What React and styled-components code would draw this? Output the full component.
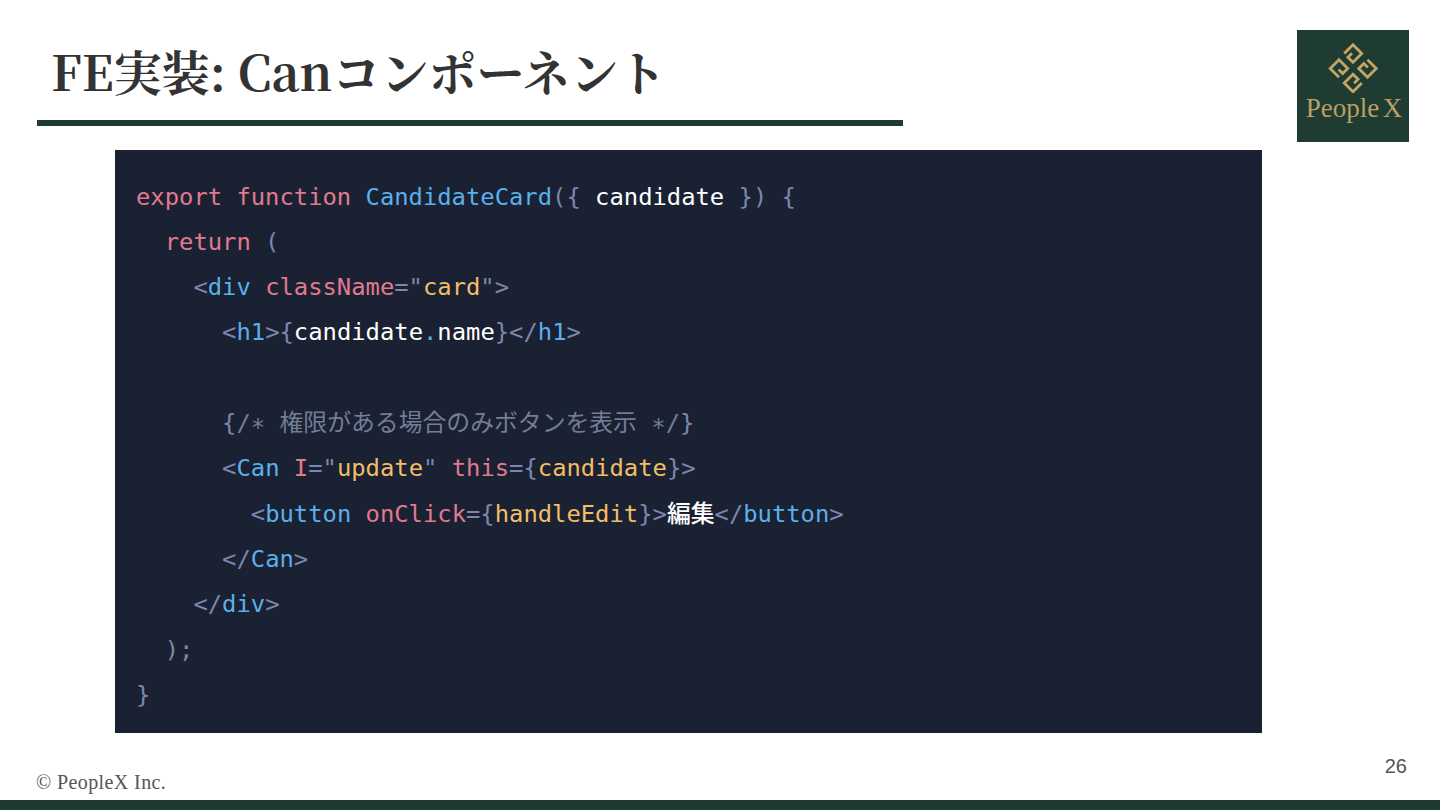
import React from "react";
import styled, { createGlobalStyle } from "styled-components";

const GREEN = "#1f3a30";

const Global = createGlobalStyle`
  html, body {
    margin: 0;
    padding: 0;
    background: #fff;
  }
`;

const Slide = styled.div`
  width: 1440px;
  height: 810px;
  display: flex;
  flex-direction: column;
  overflow: hidden;
  background: #fff;
`;

const Header = styled.header`
  display: flex;
  justify-content: space-between;
  align-items: flex-start;
  padding: 30px 31px 0 37px;
  height: 120px;
`;

const TitleWrap = styled.div`
  width: 866px;
  height: 96px;
  box-sizing: border-box;
  border-bottom: 6px solid ${GREEN};
  padding-left: 14px;
`;

const Title = styled.h1`
  margin: 0;
  font-family: "Noto Serif CJK JP", "Liberation Serif", "Noto Sans CJK JP", serif;
  font-size: 48px;
  font-weight: 700;
  line-height: 82px;
  color: #333;
  white-space: nowrap;
`;

const LogoBox = styled.div`
  width: 112px;
  height: 112px;
  background: #1e3c31;
  display: flex;
  flex-direction: column;
  align-items: center;
`;

const LogoMark = styled.svg`
  width: 62px;
  height: 55px;
  margin-top: 8px;
`;

const LogoText = styled.div`
  font-family: "Liberation Serif", serif;
  font-size: 27px;
  line-height: 30px;
  word-spacing: -3px;
  margin-left: 2px;
  color: #bd9f62;
  white-space: nowrap;
`;

const CodeRow = styled.main`
  padding-left: 115px;
`;

const CodePanel = styled.pre`
  margin: 0;
  width: 1147px;
  height: 583px;
  box-sizing: border-box;
  padding: 24.6px 0 0 21px;
  background: #1a2132;
  font-family: "DejaVu Sans Mono", "Noto Sans CJK JP", monospace;
  font-size: 23.83px;
  line-height: 45.3px;
  color: #fff;
`;

const CodeLine = styled.div`
  height: 45.3px;
  padding-left: ${(p) => p.$indent * 14.35}px;
  white-space: pre;
`;

const COLORS = {
  k: "#e07a8f",
  b: "#5bb0ea",
  o: "#f2bd68",
  p: "#7d86ad",
  w: "#ffffff",
  c: "#737d95",
};

const Tok = styled.span`
  color: ${(p) => COLORS[p.$c]};
`;

const JaTok = styled.span`
  color: #fff;
  font-weight: 500;
`;

const StarTok = styled.span`
  font-family: "Liberation Mono", monospace;
  color: ${COLORS.c};
`;

const Footer = styled.footer`
  flex: 1;
  display: flex;
  justify-content: space-between;
  padding: 0 33px 0 36px;
`;

const Copyright = styled.div`
  align-self: flex-end;
  font-family: "Liberation Serif", serif;
  font-size: 20px;
  line-height: 22px;
  letter-spacing: 0.4px;
  color: #555;
  margin-bottom: 7px;
`;

const PageNum = styled.div`
  margin-top: 21px;
  font-family: "Liberation Sans", Arial, sans-serif;
  font-size: 20px;
  line-height: 24px;
  color: #555;
`;

const BottomBar = styled.div`
  height: 10px;
  background: ${GREEN};
`;

const LINES = [
  [0, [["k", "export function "], ["b", "CandidateCard"], ["p", "({ "], ["w", "candidate"], ["p", " }) {"]]],
  [2, [["k", "return "], ["p", "("]]],
  [4, [["p", "<"], ["b", "div "], ["k", "className"], ["p", '="'], ["o", "card"], ["p", '">']]],
  [6, [["p", "<"], ["b", "h1"], ["p", ">{"], ["w", "candidate"], ["b", "."], ["w", "name"], ["p", "}</"], ["b", "h1"], ["p", ">"]]],
  [0, []],
  [6, [["p", "{"], ["c", "/"], ["s", "∗"], ["c", " 権限がある場合のみボタンを表示 "], ["s", "∗"], ["c", "/"], ["p", "}"]]],
  [6, [["p", "<"], ["b", "Can "], ["k", "I"], ["p", '="'], ["o", "update"], ["p", '" '], ["k", "this"], ["p", "={"], ["o", "candidate"], ["p", "}>"]]],
  [8, [["p", "<"], ["b", "button "], ["k", "onClick"], ["p", "={"], ["o", "handleEdit"], ["p", "}>"], ["j", "編集"], ["p", "</"], ["b", "button"], ["p", ">"]]],
  [6, [["p", "</"], ["b", "Can"], ["p", ">"]]],
  [4, [["p", "</"], ["b", "div"], ["p", ">"]]],
  [2, [["p", ");"]]],
  [0, [["p", "}"]]],
];

function Token({ c, t }) {
  if (c === "j") return <JaTok>{t}</JaTok>;
  if (c === "s") return <StarTok>{t}</StarTok>;
  return <Tok $c={c}>{t}</Tok>;
}

function Mark() {
  // four square spirals set on the diagonal
  const spiral = "M-6.2 6.2 L-6.2 -6.2 L6.2 -6.2 L6.2 6.2 L-1 6.2 L-1 0.5";
  return (
    <LogoMark viewBox="0 0 62 55">
      <g fill="none" stroke="#c4a565" strokeWidth="2.8" strokeLinejoin="miter">
        <path d={spiral} transform="translate(31 15.5) rotate(45)" />
        <path d={spiral} transform="translate(45.5 30.5) rotate(135)" />
        <path d={spiral} transform="translate(31 45) rotate(225)" />
        <path d={spiral} transform="translate(17 30.5) rotate(315)" />
      </g>
    </LogoMark>
  );
}

export default function App() {
  return (
    <Slide>
      <Global />
      <Header>
        <TitleWrap>
          <Title>FE実装: Canコンポーネント</Title>
        </TitleWrap>
        <LogoBox>
          <Mark />
          <LogoText>People X</LogoText>
        </LogoBox>
      </Header>
      <CodeRow>
        <CodePanel>
          {LINES.map(([indent, toks], i) => (
            <CodeLine key={i} $indent={indent}>
              {toks.map(([c, t], j) => (
                <Token key={j} c={c} t={t} />
              ))}
            </CodeLine>
          ))}
        </CodePanel>
      </CodeRow>
      <Footer>
        <Copyright>© PeopleX Inc.</Copyright>
        <PageNum>26</PageNum>
      </Footer>
      <BottomBar />
    </Slide>
  );
}
